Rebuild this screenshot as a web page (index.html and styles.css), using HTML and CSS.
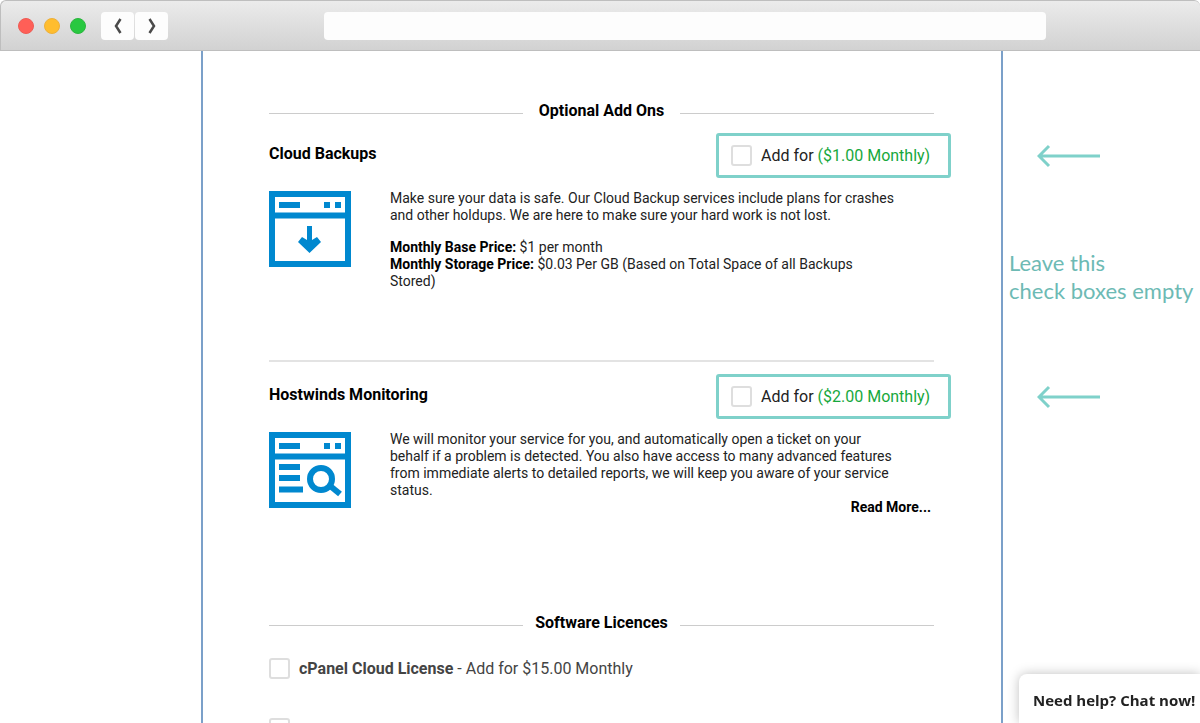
FILE: index.html
```html
<!DOCTYPE html>
<html lang="en">
<head>
<meta charset="utf-8">
<title>Optional Add Ons</title>
<link rel="stylesheet" href="styles.css">
</head>
<body>
<header class="chrome">
  <div class="lights">
    <span class="light light-close"></span>
    <span class="light light-min"></span>
    <span class="light light-max"></span>
  </div>
  <nav class="nav">
    <button class="nav-button" type="button" aria-label="Back">
      <svg width="10" height="18" viewBox="0 0 10 18"><path d="M7.500 2.000L3 9l4.500 7" /></svg>
    </button>
    <button class="nav-button" type="button" aria-label="Forward">
      <svg width="10" height="18" viewBox="0 0 10 18"><path d="M2.500 2L7 9l-4.500 7" /></svg>
    </button>
  </nav>
  <input class="address" type="text" aria-label="Address">
</header>

<div class="page">
  <main class="panel">
    <h2 class="section-title">Optional Add Ons</h2>

    <section class="addon">
      <div class="addon-head">
        <h3 class="addon-name">Cloud Backups</h3>
        <label class="option"><input class="check" type="checkbox"><span>Add for <span class="price">($1.00 Monthly)</span></span></label>
      </div>
      <div class="addon-body">
        <svg class="addon-icon" width="82" height="76" viewBox="0 0 82 76">
          <path class="frame" d="M3 3h76v70H3zM3 24.500h76" />
          <path class="solid" d="M10 11h21v6H10zM55 11h6v6h-6zM66 11h6v6h-6z" />
          <path class="solid" d="M38 35h5v14l5-3 4 5-11.500 11L29 51l4-5 5 3z" />
        </svg>
        <div class="addon-text">
          <p>Make sure your data is safe. Our Cloud Backup services include plans for crashes and other holdups. We are here to make sure your hard work is not lost.</p>
          <p><b>Monthly Base Price:</b> $1 per month<br><b>Monthly Storage Price:</b> $0.03 Per GB (Based on Total Space of all Backups Stored)</p>
        </div>
      </div>
    </section>

    <section class="addon addon-next">
      <div class="addon-head">
        <h3 class="addon-name">Hostwinds Monitoring</h3>
        <label class="option"><input class="check" type="checkbox"><span>Add for <span class="price">($2.00 Monthly)</span></span></label>
      </div>
      <div class="addon-body">
        <svg class="addon-icon" width="82" height="76" viewBox="0 0 82 76">
          <path class="frame" d="M3 3h76v70H3zM3 24.500h76" />
          <path class="solid" d="M10 11h21v6H10zM55 11h6v6h-6zM66 11h6v6h-6zM10 32h21v6H10zM10 43h21v6H10zM10 54.500h24v6H10z" />
          <circle class="lens" cx="52" cy="47" r="11" />
          <path class="frame" d="M60 53l11 9" />
        </svg>
        <div class="addon-text">
          <p>We will monitor your service for you, and automatically open a ticket on your behalf if a problem is detected. You also have access to many advanced features from immediate alerts to detailed reports, we will keep you aware of your service status.</p>
          <a class="read-more" href="#">Read More...</a>
        </div>
      </div>
    </section>

    <h2 class="section-title">Software Licences</h2>
    <div class="licenses">
      <label class="license"><input class="check" type="checkbox"><span><b>cPanel Cloud License</b> - Add for $15.00 Monthly</span></label>
      <div class="license"><input class="check" type="checkbox" aria-label="License"></div>
    </div>
  </main>

  <aside class="notes">
    <svg class="arrow" width="64" height="24" viewBox="0 0 64 24"><path d="M63 12H2M12 2L2 12l10 10" /></svg>
    <p class="note">Leave this<br>check boxes empty</p>
    <svg class="arrow" width="64" height="24" viewBox="0 0 64 24"><path d="M63 12H2M12 2L2 12l10 10" /></svg>
  </aside>
</div>

<button class="chat" type="button">Need help? Chat now!</button>
</body>
</html>
```

FILE: styles.css
```css
* {
  box-sizing: border-box;
}

body {
  display: flex;
  flex-direction: column;
  height: 100vh;
  margin: 0;
  overflow: hidden;
  background: #fff;
  color: #222;
  font-family: Roboto, sans-serif;
}

h2, h3, p {
  margin: 0;
}

b {
  font-weight: 700;
}

/* Browser bar */
.chrome {
  display: flex;
  flex: none;
  align-items: center;
  height: 51px;
  padding: 0 154px 0 17px;
  border: 1px solid #bebebe;
  border-right: 0;
  border-radius: 6px 6px 0 0;
  background: linear-gradient(#ebebeb, #d2d2d2);
}

.lights {
  display: flex;
  gap: 10px;
}

.light {
  width: 16px;
  height: 16px;
  border-radius: 50%;
}

.light-close {
  background: #ff5f57;
  border: 1px solid #ee5c55;
}

.light-min {
  background: #ffbd2e;
  border: 1px solid #edb03a;
}

.light-max {
  background: #28c840;
  border: 1px solid #2cb63f;
}

.nav {
  display: flex;
  gap: 1px;
  margin: 0 156px 0 15px;
}

.nav-button {
  display: flex;
  align-items: center;
  justify-content: center;
  width: 33px;
  height: 28px;
  padding: 0;
  border: 0;
  border-radius: 4px;
  background: #fdfdfd;
}

.nav-button path {
  fill: none;
  stroke: #4a4a4a;
  stroke-width: 2.5;
}

.address {
  flex: 1;
  min-width: 0;
  height: 28px;
  border: 0;
  border-radius: 4px;
  background: #fdfdfd;
}

/* Page columns */
.page {
  display: grid;
  flex: 1;
  grid-template-columns: 201fr 802fr 197fr;
  min-height: 0;
  overflow: hidden;
}

.panel {
  grid-column: 2;
  padding: 50px 67px 0 66px;
  border: solid #7ba0c9;
  border-width: 0 2px;
}

.section-title {
  display: grid;
  grid-template-columns: 1fr 157px 1fr;
  align-items: center;
  color: #000;
  font-size: 16px;
  font-weight: 700;
  line-height: 20px;
  text-align: center;
}

.section-title::before,
.section-title::after {
  height: 1px;
  margin-top: 4px;
  background: #ccc;
  content: "";
}

/* Add-ons */
.addon {
  padding: 12px 0 70px;
}

.addon-next {
  padding-bottom: 97px;
  border-top: 2px solid #e3e3e3;
}

.addon-head {
  display: flex;
  align-items: flex-start;
  justify-content: space-between;
  margin-right: -17px;
}

.addon-name {
  padding-top: 11px;
  color: #000;
  font-size: 16px;
  font-weight: 700;
  line-height: 20px;
}

.option {
  display: flex;
  gap: 9px;
  align-items: center;
  width: 235px;
  height: 45px;
  padding: 0 12px;
  border: 3px solid #7fd1ca;
  border-radius: 3px;
  font-size: 16px;
}

.check {
  flex: none;
  width: 21px;
  height: 21px;
  margin: 0;
  border: 2px solid #dedede;
  border-radius: 3px;
  background: #fff;
  appearance: none;
}

.check:checked {
  background: #7fd1ca;
}

.price {
  color: #17a83c;
}

.addon-body {
  display: flex;
  gap: 39px;
  padding-top: 12px;
}

.addon-icon {
  flex: none;
  margin-top: 1px;
}

.frame {
  fill: none;
  stroke: #0088cf;
  stroke-width: 6;
}

.solid {
  fill: #0088cf;
}

.lens {
  fill: none;
  stroke: #0088cf;
  stroke-width: 6;
}

.addon-text {
  flex: 1;
  font-size: 14px;
  line-height: 17px;
}

.addon-text p {
  max-width: 507px;
}

.addon-text p + p {
  margin-top: 15px;
}

.addon-text b {
  color: #000;
}

.read-more {
  display: block;
  width: fit-content;
  margin: 0 3px 0 auto;
  color: #000;
  font-weight: 700;
  text-decoration: none;
}

/* Licences */
.licenses {
  display: flex;
  flex-direction: column;
  gap: 39px;
  padding-top: 25px;
}

.license {
  display: flex;
  gap: 9px;
  align-items: center;
  color: #444;
  font-size: 16px;
  line-height: 21px;
}

/* Margin notes */
.notes {
  padding: 93px 0 0 6px;
  white-space: nowrap;
}

.arrow {
  display: block;
  margin-left: 28px;
}

.arrow path {
  fill: none;
  stroke: #7fd1ca;
  stroke-width: 3;
}

.note {
  margin: 81px 0 80px;
  color: #6dbab4;
  font-family: Lato, sans-serif;
  font-size: 22px;
  line-height: 28px;
}

.chat {
  position: fixed;
  right: 0;
  bottom: 0;
  width: 181px;
  height: 49px;
  padding: 2px 0 0 14px;
  border: 0;
  border-radius: 8px 0 0 0;
  background: #fff;
  box-shadow: 0 0 12px rgba(0, 0, 0, 0.25);
  color: #222;
  font-family: "Open Sans", sans-serif;
  font-size: 15px;
  font-weight: 700;
  text-align: left;
  white-space: nowrap;
}
```
